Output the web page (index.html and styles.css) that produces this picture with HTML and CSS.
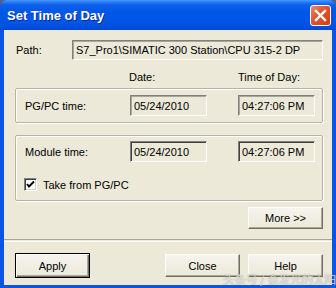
FILE: index.html
```html
<!DOCTYPE html>
<html>
<head>
<meta charset="utf-8">
<link rel="stylesheet" href="styles.css">
</head>
<body>
<div class="window">
  <div class="titlebar">
    <span class="title">Set Time of Day</span>
    <div class="close">
      <svg width="13" height="13" viewBox="0 0 13 13"><path d="M2 2 L11 11 M11 2 L2 11" stroke="#fff" stroke-width="2.4" stroke-linecap="square"/></svg>
    </div>
  </div>
  <div class="client">
    <div class="path-row">
      <span class="path-lbl">Path:</span>
      <div class="field path">S7_Pro1\SIMATIC 300 Station\CPU 315-2 DP</div>
    </div>
    <div class="tgrid heads">
      <span></span><span class="h-date">Date:</span><span>Time of Day:</span>
    </div>
    <div class="group g1">
      <div class="tgrid">
        <span>PG/PC time:</span>
        <div class="field soft">05/24/2010</div>
        <div class="field soft">04:27:06 PM</div>
      </div>
    </div>
    <div class="group g2">
      <div class="tgrid">
        <span>Module time:</span>
        <div class="field deep">05/24/2010</div>
        <div class="field deep">04:27:06 PM</div>
      </div>
      <div class="check-row">
        <span class="checkbox"><svg width="9" height="9" viewBox="0 0 9 9"><path d="M1 4 L3 6.5 L8 1.5" fill="none" stroke="#000" stroke-width="2"/></svg></span>
        <span>Take from PG/PC</span>
      </div>
    </div>
    <div class="more-row"><div class="btn">More &gt;&gt;</div></div>
    <div class="sep"></div>
    <div class="btn-row">
      <div class="btn default">Apply</div>
      <div class="spacer"></div>
      <div class="btn">Close</div>
      <div class="btn">Help</div>
    </div>
  </div>
  <div class="watermark">头条号 / 会发光的太阳</div>
</div>
</body>
</html>
```
FILE: styles.css
```css
html, body { margin: 0; padding: 0; background: #5a6070; }
body { width: 336px; height: 288px; overflow: hidden; }
.window {
  position: relative;
  width: 336px; height: 288px;
  box-sizing: border-box;
  display: flex; flex-direction: column;
  background: #0a55e4;
  border-radius: 7px 7px 0 0;
  font-family: "Liberation Sans", Arial, sans-serif;
  font-size: 11px; color: #000;
}
.titlebar {
  height: 30px; flex: none;
  display: flex; align-items: center;
  padding: 0 5px 0 7px;
  border-radius: 7px 7px 0 0;
  background: linear-gradient(180deg, #4a9bff 0px, #2a7cf7 2px, #0c5fea 5px, #0057e6 12px, #0055e5 22px, #0050e0 27px, #0047d6 30px);
}
.title {
  flex: 1;
  color: #fff; font-weight: bold; font-size: 13px;
  font-family: "Liberation Sans", Arial, sans-serif;
  text-shadow: 1px 1px 0 #0a2a9a;
  padding-top: 1px;
}
.close {
  width: 19px; height: 19px;
  border: 1px solid #fff; border-radius: 3px;
  background: linear-gradient(135deg, #f08a6a 0%, #e5552e 40%, #d33c14 100%);
  display: flex; align-items: center; justify-content: center;
  margin-top: 1px;
}
.client {
  flex: 1;
  margin: 0 4px 3px 4px;
  background: #ece9d8;
  padding: 10px 9px 0 11px;
  display: flex; flex-direction: column;
}
.path-row { display: flex; align-items: center; height: 20px; }
.path-lbl { width: 56px; padding-left: 1px; }
.field {
  box-sizing: border-box;
  height: 21px;
  display: flex; align-items: center;
  padding-left: 3px;
  border: 1px solid; border-color: #808080 #fff #fff #808080;
  white-space: nowrap;
}
.field.path { width: 251px; height: 20px; box-shadow: inset 1px 1px 0 #a8a69a; }
.field.soft { width: 77px; box-shadow: inset 1px 1px 0 #a8a69a; }
.field.deep { width: 77px; box-shadow: inset 1px 1px 0 #404040; }
.tgrid {
  display: grid;
  grid-template-columns: 105px 108px 77px;
  align-items: center;
}
.heads { margin-top: 10px; height: 14px; padding-left: 10px; }
.h-date { margin-left: -1px; }
.group {
  border: 1px solid #b5b3a6;
  box-shadow: 1px 1px 0 #fff, inset 1px 1px 0 #fff;
  border-radius: 2px;
  padding: 6px 0 6px 9px;
}
.g1 { margin-top: 4px; }
.g2 { margin-top: 12px; padding-top: 5px; padding-bottom: 9px; }
.check-row { display: flex; align-items: center; gap: 6px; margin-top: 16px; height: 13px; }
.checkbox {
  box-sizing: border-box;
  width: 13px; height: 13px;
  background: #fff;
  border: 1px solid; border-color: #808080 #fff #fff #808080;
  box-shadow: inset 1px 1px 0 #404040, inset -1px -1px 0 #d4d0c8;
  display: flex; align-items: center; justify-content: center;
  margin-left: -1px;
}
.more-row { display: flex; justify-content: flex-end; margin-top: 6px; }
.btn {
  box-sizing: border-box;
  width: 75px; height: 22px;
  display: flex; align-items: center; justify-content: center;
  background: linear-gradient(180deg, #f5f4ee 0%, #ece9d8 100%);
  border: 1px solid; border-color: #fff #716f64 #716f64 #fff;
  box-shadow: inset -1px -1px 0 #aca899;
}
.sep { margin: 10px -9px 0 -11px; height: 1px; border-top: 1px solid #aca899; border-bottom: 1px solid #fff; }
.btn-row { display: flex; align-items: center; gap: 8px; margin-top: 11px; padding-right: 0; }
.btn-row .btn { height: 23px; }
.btn.default {
  border: 1px solid #000;
  box-shadow: inset 1px 1px 0 #fff, inset -1px -1px 0 #716f64, inset -2px -2px 0 #aca899;
  height: 25px;
}
.spacer { flex: 1; }
.watermark {
  position: absolute;
  left: 223px; top: 273px;
  font-family: "Noto Sans CJK SC", sans-serif;
  font-size: 11.5px; line-height: 12px;
  color: rgba(235, 235, 235, 0.85);
  text-shadow: 0 0 1px rgba(90, 90, 90, 0.6);
  white-space: nowrap;
}
```
